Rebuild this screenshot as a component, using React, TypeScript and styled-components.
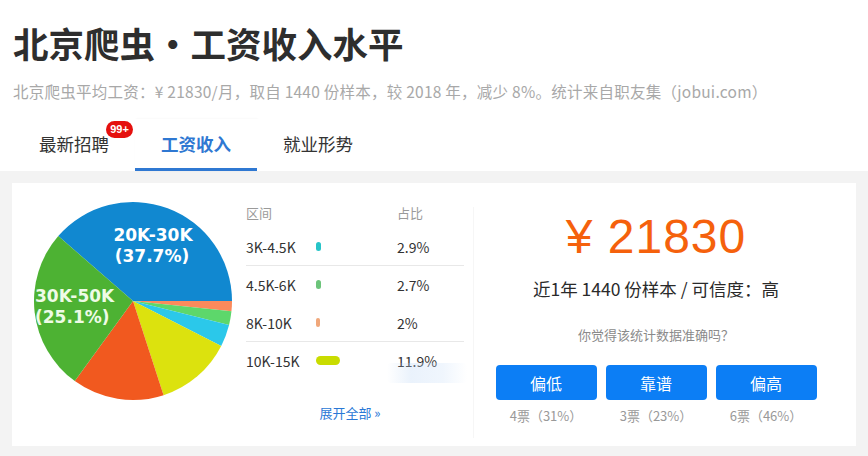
import React from "react";
import styled, { createGlobalStyle } from "styled-components";

const GlobalStyle = createGlobalStyle`
  html, body { margin: 0; padding: 0; background: #ffffff; }
  body {
    font-family: "Noto Sans CJK SC", "Liberation Sans", sans-serif;
    color: #333;
    width: 868px;
    height: 456px;
    overflow: hidden;
  }
  * { box-sizing: border-box; }
`;

const Page = styled.div`
  display: flex;
  flex-direction: column;
  height: 456px;
`;

const Header = styled.header`
  padding: 20px 0 0 13px;
`;

const Title = styled.h1`
  margin: 0;
  font-size: 35.5px;
  line-height: 46px;
  font-weight: 700;
  color: #2e2e2e;
`;

const Subtitle = styled.p`
  margin: 14px 0 0;
  font-size: 15.5px;
  line-height: 22px;
  color: #a8a8a8;
  white-space: nowrap;
  letter-spacing: 0.25px;
`;

const TabBar = styled.nav`
  display: flex;
  margin-top: 17px;
  padding-left: 13px;
  height: 52px;
`;

const Tab = styled.div<{ $active?: boolean }>`
  position: relative;
  width: 122px;
  display: flex;
  align-items: center;
  justify-content: center;
  font-size: 17.5px;
  font-weight: ${(p) => (p.$active ? 700 : 400)};
  color: ${(p) => (p.$active ? "#2f78d2" : "#333")};
  background: #fff;
  border-bottom: 3px solid ${(p) => (p.$active ? "#2f78d2" : "transparent")};
  box-shadow: ${(p) => (p.$active ? "1px 0 2px rgba(0,0,0,0.06)" : "none")};
`;

const TabLabel = styled.span`
  position: relative;
`;

const Badge = styled.span`
  position: absolute;
  top: -10px;
  right: -24px;
  height: 17px;
  min-width: 27px;
  padding: 0 4px;
  border-radius: 9px;
  background: #e5100e;
  color: #fff;
  font-family: "Liberation Sans", sans-serif;
  font-size: 11px;
  font-weight: 700;
  line-height: 17px;
  text-align: center;
`;

const Body = styled.main`
  flex: 1;
  background: #f3f3f3;
  padding: 12px 12px 9px;
`;

const Card = styled.section`
  height: 263px;
  background: #fff;
  display: flex;
`;

const PieArea = styled.div`
  width: 234px;
  padding: 18px 0 0 21px;
`;

const TableArea = styled.div`
  position: relative;
  width: 227px;
  padding: 18px 9px 0 0;
  display: flex;
  flex-direction: column;
`;

const HeadRow = styled.div`
  display: grid;
  grid-template-columns: 70px 81px 1fr;
  height: 22px;
  align-items: center;
  font-size: 13px;
  color: #9a9a9a;
  margin-bottom: 5px;
`;

const Row = styled.div<{ $line?: boolean }>`
  display: grid;
  grid-template-columns: 70px 81px 1fr;
  height: 38px;
  align-items: center;
  font-size: 14px;
  color: #333;
  border-bottom: 1px solid ${(p) => (p.$line ? "#e8e8e8" : "transparent")};
`;

const Marker = styled.span<{ $color: string }>`
  display: block;
  height: 9px;
  border-radius: 5px;
  background: ${(p) => p.$color};
`;

const More = styled.a`
  margin-top: 23px;
  text-align: center;
  font-size: 13px;
  line-height: 20px;
  color: #2a78d6;
  text-decoration: none;
  padding-right: 10px;
`;

const Watermark = styled.span`
  position: absolute;
  left: 141px;
  top: 180px;
  width: 80px;
  height: 20px;
  border-radius: 4px;
  background: linear-gradient(
    90deg,
    rgba(190, 215, 245, 0) 0%,
    rgba(190, 215, 245, 0.32) 30%,
    rgba(200, 222, 248, 0.28) 70%,
    rgba(200, 222, 248, 0) 100%
  );
  pointer-events: none;
`;

const RightPanel = styled.div`
  flex: 1;
  display: flex;
  flex-direction: column;
  align-items: center;
  padding: 26px 17px 0 0;
  position: relative;
  &::before {
    content: "";
    position: absolute;
    left: 0;
    top: 24px;
    bottom: 8px;
    width: 1px;
    background: #f6f6f6;
  }
`;

const Price = styled.div`
  font-family: "Liberation Sans", sans-serif;
  font-size: 48px;
  line-height: 56px;
  color: #f5610c;
  letter-spacing: 1px;
`;

const Sample = styled.div`
  margin-top: 12px;
  font-size: 17.5px;
  line-height: 24px;
  color: #2a2a2a;
`;

const Question = styled.div`
  margin-top: 24px;
  font-size: 13px;
  line-height: 20px;
  color: #8a8a8a;
`;

const VoteRow = styled.div`
  margin-top: 20px;
  display: flex;
  gap: 9px;
`;

const VoteItem = styled.div`
  display: flex;
  flex-direction: column;
  align-items: center;
`;

const VoteButton = styled.button`
  width: 101px;
  height: 35px;
  border: none;
  border-radius: 4px;
  background: #0c7ef5;
  color: #fff;
  font-family: "Noto Sans CJK SC", sans-serif;
  font-size: 16px;
  cursor: pointer;
`;

const VoteCount = styled.div`
  margin-top: 7px;
  font-size: 13px;
  line-height: 18px;
  color: #999;
`;

type Slice = { from: number; to: number; color: string };

const slices: Slice[] = [
  { from: -49, to: 90, color: "#1188d0" },
  { from: 90, to: 96, color: "#fb8a5c" },
  { from: 96, to: 104, color: "#5dd76b" },
  { from: 104, to: 117, color: "#2bc8ea" },
  { from: 117, to: 162, color: "#dce20e" },
  { from: 162, to: 216, color: "#f1591f" },
  { from: 216, to: 311, color: "#4db233" },
];

const CX = 100;
const CY = 100;
const R = 99;

function pt(a: number) {
  const rad = (a * Math.PI) / 180;
  return [CX + R * Math.sin(rad), CY - R * Math.cos(rad)];
}

function wedge(s: Slice) {
  const [x1, y1] = pt(s.from);
  const [x2, y2] = pt(s.to);
  const large = s.to - s.from > 180 ? 1 : 0;
  return `M${CX},${CY} L${x1.toFixed(2)},${y1.toFixed(2)} A${R},${R} 0 ${large} 1 ${x2.toFixed(2)},${y2.toFixed(2)} Z`;
}

const PieChart = () => (
  <svg width="200" height="200" viewBox="0 0 200 200">
    {slices.map((s, i) => (
      <path key={i} d={wedge(s)} fill={s.color} />
    ))}
    <g fontFamily="DejaVu Sans, sans-serif" fontWeight="700" fontSize="17">
      <text x="120" y="40" textAnchor="middle" fill="#ffffff">20K-30K</text>
      <text x="119" y="61" textAnchor="middle" fill="#ffffff">(37.7%)</text>
      <text x="2" y="101" fill="#eefbe6">30K-50K</text>
      <text x="2" y="122" fill="#eefbe6">(25.1%)</text>
    </g>
  </svg>
);

const rows = [
  { range: "3K-4.5K", color: "#27c4c8", w: 5, pct: "2.9%", line: true },
  { range: "4.5K-6K", color: "#6cc47a", w: 5, pct: "2.7%", line: false },
  { range: "8K-10K", color: "#f0a77a", w: 4, pct: "2%", line: true },
  { range: "10K-15K", color: "#c9dc00", w: 24, pct: "11.9%", line: false },
];

const votes = [
  { label: "偏低", count: "4票（31%）" },
  { label: "靠谱", count: "3票（23%）" },
  { label: "偏高", count: "6票（46%）" },
];

export default function App() {
  return (
    <>
      <GlobalStyle />
      <Page>
        <Header>
          <Title>北京爬虫・工资收入水平</Title>
          <Subtitle>
            北京爬虫平均工资：¥ 21830/月，取自 1440 份样本，较 2018 年，减少 8%。统计来自职友集（jobui.com）
          </Subtitle>
        </Header>
        <TabBar>
          <Tab>
            <TabLabel>
              最新招聘
              <Badge>99+</Badge>
            </TabLabel>
          </Tab>
          <Tab $active>
            <TabLabel>工资收入</TabLabel>
          </Tab>
          <Tab>
            <TabLabel>就业形势</TabLabel>
          </Tab>
        </TabBar>
        <Body>
          <Card>
            <PieArea>
              <PieChart />
            </PieArea>
            <TableArea>
              <Watermark />
              <HeadRow>
                <span>区间</span>
                <span />
                <span>占比</span>
              </HeadRow>
              {rows.map((r) => (
                <Row key={r.range} $line={r.line}>
                  <span>{r.range}</span>
                  <span>
                    <Marker $color={r.color} style={{ width: r.w }} />
                  </span>
                  <span>{r.pct}</span>
                </Row>
              ))}
              <More href="#">展开全部 »</More>
            </TableArea>
            <RightPanel>
              <Price>¥ 21830</Price>
              <Sample>近1年 1440 份样本 / 可信度：高</Sample>
              <Question>你觉得该统计数据准确吗？</Question>
              <VoteRow>
                {votes.map((v) => (
                  <VoteItem key={v.label}>
                    <VoteButton>{v.label}</VoteButton>
                    <VoteCount>{v.count}</VoteCount>
                  </VoteItem>
                ))}
              </VoteRow>
            </RightPanel>
          </Card>
        </Body>
      </Page>
    </>
  );
}
